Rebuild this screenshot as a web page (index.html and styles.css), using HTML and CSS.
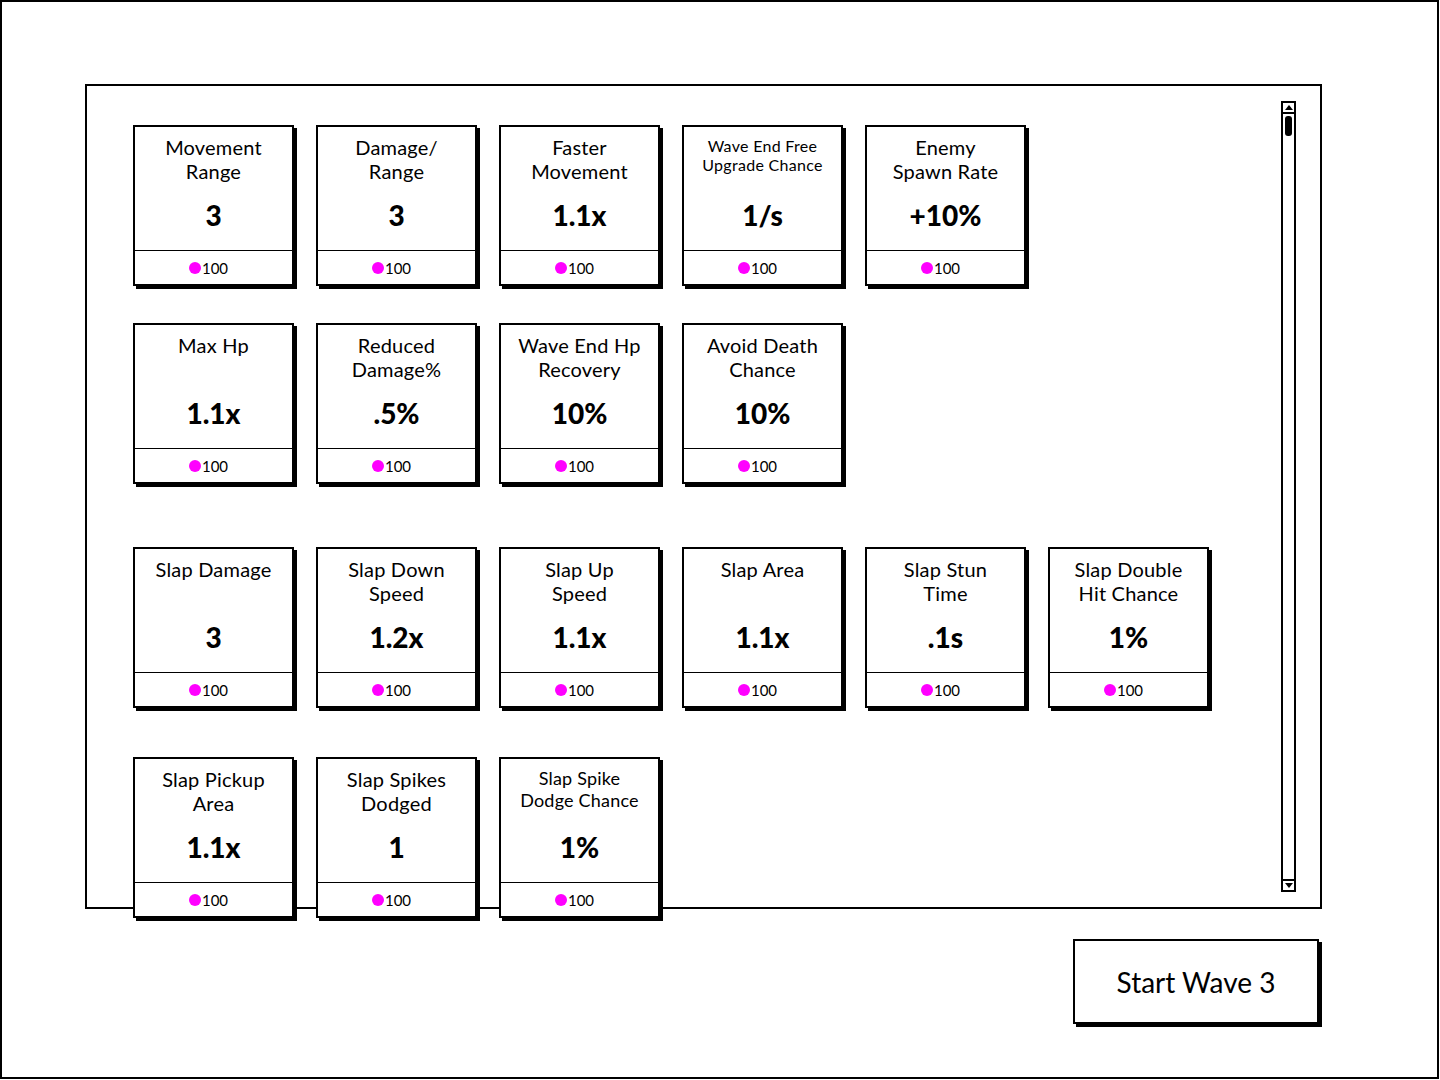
FILE: index.html
```html
<!DOCTYPE html>
<html lang="en">
<head>
<meta charset="utf-8">
<title>Upgrades</title>
<link rel="stylesheet" href="styles.css">
</head>
<body>
<div class="screen">
  <div class="panel">
    <div class="content">
      <div class="group group-a">
        <div class="row">
          <div class="card"><div class="body"><div class="title">Movement<br>Range</div><div class="value">3</div></div><div class="foot"><span class="dot"></span>100</div></div>
          <div class="card"><div class="body"><div class="title">Damage/<br>Range</div><div class="value">3</div></div><div class="foot"><span class="dot"></span>100</div></div>
          <div class="card"><div class="body"><div class="title">Faster<br>Movement</div><div class="value">1.1x</div></div><div class="foot"><span class="dot"></span>100</div></div>
          <div class="card"><div class="body"><div class="title title-sm">Wave End Free<br>Upgrade Chance</div><div class="value">1/s</div></div><div class="foot"><span class="dot"></span>100</div></div>
          <div class="card"><div class="body"><div class="title">Enemy<br>Spawn Rate</div><div class="value">+10%</div></div><div class="foot"><span class="dot"></span>100</div></div>
        </div>
        <div class="row">
          <div class="card"><div class="body"><div class="title">Max Hp</div><div class="value">1.1x</div></div><div class="foot"><span class="dot"></span>100</div></div>
          <div class="card"><div class="body"><div class="title">Reduced<br>Damage%</div><div class="value">.5%</div></div><div class="foot"><span class="dot"></span>100</div></div>
          <div class="card"><div class="body"><div class="title">Wave End Hp<br>Recovery</div><div class="value">10%</div></div><div class="foot"><span class="dot"></span>100</div></div>
          <div class="card"><div class="body"><div class="title">Avoid Death<br>Chance</div><div class="value">10%</div></div><div class="foot"><span class="dot"></span>100</div></div>
        </div>
      </div>
      <div class="group group-b">
        <div class="row">
          <div class="card"><div class="body"><div class="title">Slap Damage</div><div class="value">3</div></div><div class="foot"><span class="dot"></span>100</div></div>
          <div class="card"><div class="body"><div class="title">Slap Down<br>Speed</div><div class="value">1.2x</div></div><div class="foot"><span class="dot"></span>100</div></div>
          <div class="card"><div class="body"><div class="title">Slap Up<br>Speed</div><div class="value">1.1x</div></div><div class="foot"><span class="dot"></span>100</div></div>
          <div class="card"><div class="body"><div class="title">Slap Area</div><div class="value">1.1x</div></div><div class="foot"><span class="dot"></span>100</div></div>
          <div class="card"><div class="body"><div class="title">Slap Stun<br>Time</div><div class="value">.1s</div></div><div class="foot"><span class="dot"></span>100</div></div>
          <div class="card"><div class="body"><div class="title">Slap Double<br>Hit Chance</div><div class="value">1%</div></div><div class="foot"><span class="dot"></span>100</div></div>
        </div>
        <div class="row">
          <div class="card"><div class="body"><div class="title">Slap Pickup<br>Area</div><div class="value">1.1x</div></div><div class="foot"><span class="dot"></span>100</div></div>
          <div class="card"><div class="body"><div class="title">Slap Spikes<br>Dodged</div><div class="value">1</div></div><div class="foot"><span class="dot"></span>100</div></div>
          <div class="card"><div class="body"><div class="title title-md">Slap Spike<br>Dodge Chance</div><div class="value">1%</div></div><div class="foot"><span class="dot"></span>100</div></div>
        </div>
      </div>
    </div>
    <div class="scrollbar">
      <div class="sb-btn sb-up"><svg width="8" height="5" viewBox="0 0 8 5"><polygon points="0,5 4,0 8,5" fill="#000"/></svg></div>
      <div class="sb-thumb"></div>
      <div class="sb-track"></div>
      <div class="sb-btn sb-down"><svg width="8" height="5" viewBox="0 0 8 5"><polygon points="0,0 8,0 4,5" fill="#000"/></svg></div>
    </div>
  </div>
  <div class="actions">
    <button class="start">Start Wave 3</button>
  </div>
</div>
</body>
</html>
```

FILE: styles.css
```css
* { box-sizing: border-box; }

html, body {
  margin: 0;
  padding: 0;
  background: #fff;
}

body {
  font-family: Lato, "Open Sans", sans-serif;
  color: #000;
}

.screen {
  width: 1439px;
  height: 1079px;
  border: 2px solid #000;
  padding: 82px 0 0 83px;
  background: #fff;
}

.panel {
  width: 1237px;
  height: 825px;
  border: 2px solid #000;
  display: flex;
  padding: 15px 24px 15px 46px;
}

.content {
  flex: 1;
  padding-top: 24px;
  display: flex;
  flex-direction: column;
  gap: 63px;
}

.group {
  display: flex;
  flex-direction: column;
}

.group-a { gap: 37px; }
.group-b { gap: 49px; }

.row {
  display: flex;
  gap: 22px;
}

.card {
  width: 161px;
  height: 161px;
  flex: none;
  border: 2px solid #000;
  box-shadow: 3px 3px 0 #000;
  background: #fff;
  display: flex;
  flex-direction: column;
  position: relative;
}

.body {
  flex: 1;
  display: flex;
  flex-direction: column;
  align-items: center;
  padding-top: 8px;
}

.title {
  height: 50px;
  font-size: 20px;
  line-height: 24px;
  text-align: center;
  letter-spacing: 0.2px;
}

.title-sm {
  font-size: 16px;
  line-height: 19px;
  padding-top: 1px;
  letter-spacing: 0.3px;
}

.title-md {
  font-size: 18px;
  line-height: 22px;
  letter-spacing: 0.2px;
}

.value {
  margin-top: 14px;
  font-size: 28px;
  line-height: 32px;
  font-weight: 900;
}

.foot {
  height: 34px;
  flex: none;
  border-top: 1.5px solid #000;
  display: flex;
  align-items: center;
  justify-content: center;
  font-size: 15px;
  padding-right: 10px;
}

.dot {
  width: 12px;
  height: 12px;
  border-radius: 50%;
  background: #ff00ff;
  margin-right: 1px;
}

.scrollbar {
  width: 15px;
  flex: none;
  border: 2px solid #000;
  display: flex;
  flex-direction: column;
  background: #fff;
}

.sb-btn {
  height: 11px;
  display: flex;
  align-items: center;
  justify-content: center;
  flex: none;
}

.sb-up { border-bottom: 2px solid #000; }
.sb-down { border-top: 2px solid #000; }

.sb-thumb {
  height: 20px;
  margin: 2px 2px 0;
  background: #000;
  border-radius: 3px;
  flex: none;
}

.sb-track { flex: 1; }

.actions {
  width: 1234px;
  display: flex;
  justify-content: flex-end;
  margin-top: 30px;
}

.start {
  width: 246px;
  height: 85px;
  border: 2px solid #000;
  box-shadow: 3px 3px 0 #000;
  background: #fff;
  font-family: Lato, "Open Sans", sans-serif;
  font-size: 28px;
  color: #000;
  padding: 0;
  cursor: pointer;
}
```
